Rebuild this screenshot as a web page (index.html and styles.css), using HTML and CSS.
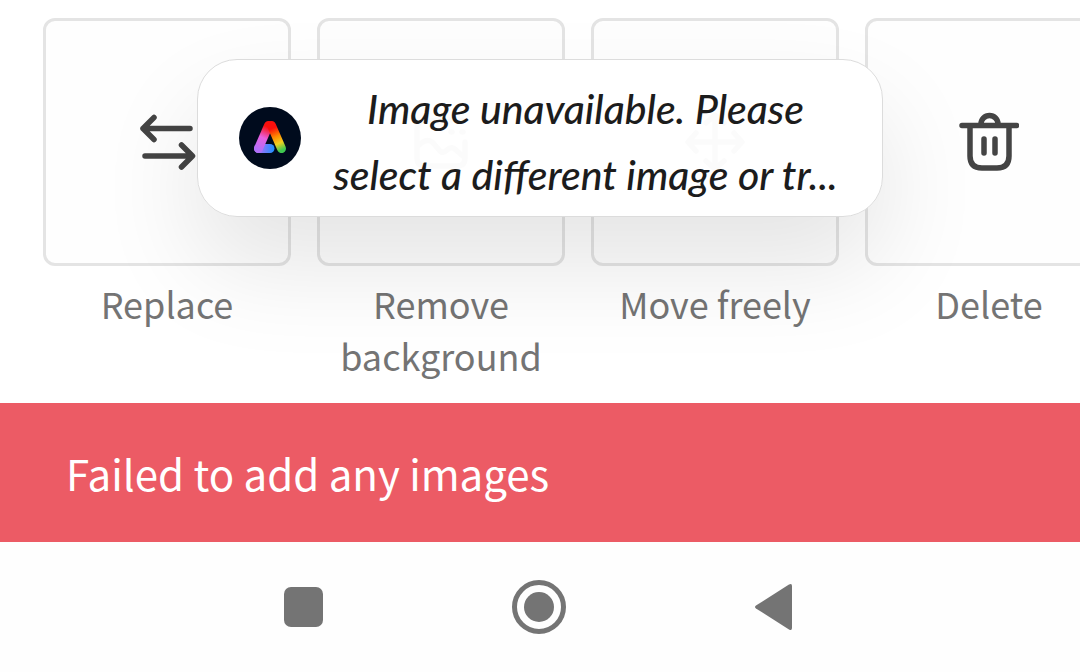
FILE: index.html
```html
<!DOCTYPE html>
<html lang="en">
<head>
  <meta charset="UTF-8">
  <meta name="viewport" content="width=device-width, initial-scale=1">
  <title>Image options</title>
  <link rel="stylesheet" href="styles.css">
</head>
<body>
  <main class="actions">
    <button class="action" type="button">
      <span class="tile">
        <svg class="icon" viewBox="0 0 60 60">
          <path d="M53 16.500H6M17 5.500L6 16.500l11 11M8 44h47M44.500 33l11 11-11 11"/>
        </svg>
      </span>
      <span class="label">Replace</span>
    </button>
    <button class="action" type="button">
      <span class="tile">
        <svg class="icon" viewBox="0 0 60 60">
          <path d="M30 9H14Q6 9 6 17v29q0 8 8 8h32q8 0 8-8V30M7 34q10-10 16-2l6 7q3 3 7-1 5-5 10 1l7 6"/>
          <path d="M40 8h1M51 8h1M40 20h1M51 20h1"/>
        </svg>
      </span>
      <span class="label">Remove background</span>
    </button>
    <button class="action" type="button">
      <span class="tile">
        <svg class="icon" viewBox="0 0 60 60">
          <path d="M30 4v52M4 30h52M21 11l9-8 9 8M21 49l9 8 9-8M11 21l-8 9 8 9M49 21l8 9-8 9"/>
        </svg>
      </span>
      <span class="label">Move freely</span>
    </button>
    <button class="action" type="button">
      <span class="tile">
        <svg class="icon" viewBox="0 0 60 60">
          <path d="M3 13.500h54.500M22 13v-1a8.500 8.500 0 0 1 17 0v1M11 14v30q0 12 12 12h15q12 0 12-12V14M25 27v14M36 27v14"/>
        </svg>
      </span>
      <span class="label">Delete</span>
    </button>
  </main>

  <div class="error" role="alert">Failed to add any images</div>

  <nav class="navbar">
    <button type="button" aria-label="Recent apps">
      <svg viewBox="0 0 60 60"><rect x="10" y="10" width="39" height="40" rx="7"/></svg>
    </button>
    <button type="button" aria-label="Home">
      <svg viewBox="0 0 60 60">
        <circle class="ring" cx="29" cy="30" r="24.500"/>
        <circle cx="29" cy="30" r="15"/>
      </svg>
    </button>
    <button type="button" aria-label="Back">
      <svg viewBox="0 0 60 60"><path d="M10 28.500L43 7.500q3-1.500 3 1.500v42q0 3-3 1.500L10 31.500q-2-1.500 0-3z"/></svg>
    </button>
  </nav>

  <div class="toast" role="status">
    <svg class="logo" viewBox="0 0 62 62">
      <defs>
        <linearGradient id="left" gradientUnits="userSpaceOnUse" x1="31" y1="16" x2="19" y2="43">
          <stop offset="0.150" stop-color="#fa0f0c"/>
          <stop offset="0.550" stop-color="#e85fe0"/>
          <stop offset="1" stop-color="#b070fa"/>
        </linearGradient>
        <linearGradient id="right" gradientUnits="userSpaceOnUse" x1="31" y1="16" x2="43" y2="43">
          <stop offset="0.200" stop-color="#fa0f0c"/>
          <stop offset="0.500" stop-color="#ff8a00"/>
          <stop offset="0.750" stop-color="#f0d020"/>
          <stop offset="1" stop-color="#40c850"/>
        </linearGradient>
        <linearGradient id="foot" gradientUnits="userSpaceOnUse" x1="19" y1="0" x2="35" y2="0">
          <stop offset="0" stop-color="#b070fa"/>
          <stop offset="1" stop-color="#1e90ff"/>
        </linearGradient>
      </defs>
      <circle cx="31" cy="31" r="31" fill="#000b1d"/>
      <path d="M19.500 41.500H31" stroke="url(#foot)"/>
      <path d="M29.500 18.500L19.500 41.500" stroke="url(#left)"/>
      <path d="M32.500 18.500L42.500 41.500" stroke="url(#right)"/>
    </svg>
    <p class="message">Image unavailable. Please<br>select a different image or tr...</p>
  </div>
</body>
</html>
```

FILE: styles.css
```css
body {
  margin: 0;
  min-height: 100vh;
  background: #fff;
  font-family: "Noto Sans CJK SC", "Noto Sans", sans-serif;
  color: #747474;
  display: flex;
  flex-direction: column;
  position: relative;
  overflow-x: hidden;
}

button {
  padding: 0;
  border: 0;
  background: none;
  font: inherit;
  color: inherit;
  cursor: pointer;
}

.actions {
  display: flex;
  align-items: flex-start;
  gap: 26px;
  padding: 18px 43px 22px;
  overflow: hidden;
}

.action {
  flex: 0 0 248px;
  display: flex;
  flex-direction: column;
  align-items: center;
  gap: 11px;
}

.tile {
  box-sizing: border-box;
  width: 248px;
  height: 248px;
  border: 3px solid #e4e4e4;
  border-radius: 12px;
  background: #fefefe;
  display: flex;
  align-items: center;
  justify-content: center;
}

.icon {
  width: 60px;
  height: 60px;
  fill: none;
  stroke: #444;
  stroke-width: 5.500;
  stroke-linecap: round;
  stroke-linejoin: round;
}

.label {
  font-size: 36px;
  line-height: 52px;
  text-align: center;
  max-width: 220px;
}

.error {
  background: #ec5b65;
  color: #fff;
  padding: 36px 66px;
  font-size: 42px;
  line-height: 67px;
}

.navbar {
  flex: 1;
  display: flex;
  align-items: center;
  justify-content: center;
  gap: 176px;
  background: #fefefe;
}

.navbar button,
.navbar svg {
  display: block;
  width: 60px;
  height: 60px;
  fill: #747474;
}

.navbar .ring {
  fill: none;
  stroke: #747474;
  stroke-width: 5;
}

.toast {
  position: absolute;
  top: 59px;
  left: 50%;
  transform: translateX(-50%);
  box-sizing: border-box;
  width: 686px;
  padding: 8px 44px 8px 41px;
  border: 1px solid #dcdcdc;
  border-radius: 40px;
  background: rgba(255, 255, 255, 0.98);
  box-shadow: 0 50px 100px rgba(0, 0, 0, 0.1);
  display: flex;
  align-items: center;
  gap: 32px;
}

.logo {
  flex: none;
  width: 62px;
  height: 62px;
  fill: none;
  stroke-width: 9;
  stroke-linecap: round;
}

.message {
  flex: 1;
  margin: 0;
  padding-top: 8px;
  font-family: Lato, sans-serif;
  font-style: italic;
  font-weight: 500;
  font-size: 41px;
  line-height: 66px;
  text-align: center;
  white-space: nowrap;
  color: #1c1c1c;
}
```
